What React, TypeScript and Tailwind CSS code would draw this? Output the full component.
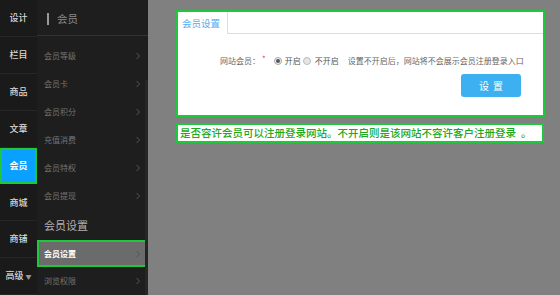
import React from "react";

const font = { fontFamily: '"Noto Sans CJK SC", "Noto Sans", sans-serif' };

function Chevron() {
  return (
    <svg width="6" height="8" viewBox="0 0 6 8" className="shrink-0">
      <path d="M1.5 1 L4.5 4 L1.5 7" fill="none" stroke="#555" strokeWidth="1" />
    </svg>
  );
}

export default function App() {
  const col1 = ["设计", "栏目", "商品", "文章", "会员", "商城", "商铺", "高级"];
  const items1 = ["会员等级", "会员卡", "会员积分", "充值消费", "会员特权", "会员提现"];
  return (
    <div className="flex w-[560px] h-[295px] overflow-hidden whitespace-nowrap" style={font}>
      <div className="w-[37px] bg-[#1a1a1a] flex flex-col shrink-0">
        {col1.map((t) =>
          t === "会员" ? (
            <div key={t} className="h-[37.5px] flex items-center justify-center bg-[#0aa0ff] border-2 border-[#1ec83a] text-[9px] text-white font-bold">
              {t}
            </div>
          ) : (
            <div key={t} className="h-[37.5px] flex items-center justify-center border-b border-[#262626] text-[9px] text-[#d8d8d8] font-medium">
              {t}
              {t === "高级" && <span className="text-[6px] ml-[2px] text-[#999]">▼</span>}
            </div>
          )
        )}
      </div>
      <div className="w-[111px] bg-[#1e1e1e] flex flex-col shrink-0 relative">
        <div className="h-[36px] border-b border-[#333] flex items-center pl-[10px] gap-[8px] pt-[3px]">
          <div className="w-[2px] h-[12px] bg-[#999]" />
          <span className="text-[10.5px] text-[#8a8a8a]">会员</span>
        </div>
        <div className="h-[6px]" />
        {items1.map((t) => (
          <div key={t} className="h-[28px] flex items-center justify-between pl-[7px] pr-[7px] text-[8px] text-[#737373]">
            <span>{t}</span>
            <Chevron />
          </div>
        ))}
        <div className="h-[30px] flex items-center pl-[7px] text-[11px] text-[#b0b0b0]">会员设置</div>
        <div className="h-[27px] flex items-center justify-between pl-[5px] pr-[5px] bg-[#6b6b6b] border-2 border-[#1ec83a] text-[8px] text-white font-bold">
          <span>会员设置</span>
          <Chevron />
        </div>
        <div className="h-[28px] flex items-center justify-between pl-[7px] pr-[7px] text-[8px] text-[#737373]">
          <span>浏览权限</span>
          <Chevron />
        </div>
        <div className="absolute right-0 top-[80px] bottom-0 w-[3px] bg-[#262626]" />
      </div>
      <div className="flex-1 bg-[#808080] pl-[28px] pt-[10px] flex flex-col">
        <div className="w-[369px] h-[107px] bg-white border-2 border-[#1ec83a] flex flex-col">
          <div className="flex h-[22px]">
            <div className="w-[50px] border-r border-[#ddd] flex items-center pl-[4px] text-[9.5px] text-[#55adf0]">会员设置</div>
            <div className="flex-1 border-b border-[#ddd]" />
          </div>
          <div className="flex items-center h-[14px] mt-[20px] pl-[42px] text-[8px] text-[#666]">
            <span>网站会员：</span>
            <span className="text-[#f33] text-[8px] ml-[2px] -mt-[4px]">*</span>
            <span className="ml-[8px] w-[8px] h-[8px] rounded-full border border-[#aaa] bg-[#eee] flex items-center justify-center">
              <span className="w-[4px] h-[4px] rounded-full bg-[#555]" />
            </span>
            <span className="ml-[3px] text-[#555]">开启</span>
            <span className="ml-[2px] w-[8px] h-[8px] rounded-full border border-[#bbb] bg-[#e6e6e6]" />
            <span className="ml-[4px] text-[#555]">不开启</span>
            <span className="ml-[9px] text-[#666]">设置不开启后，网站将不会展示会员注册登录入口</span>
          </div>
          <div className="flex justify-end pr-[22px] mt-[6px]">
            <div className="w-[60px] h-[23px] rounded-[3px] bg-[#3cb0f0] text-white text-[10px] tracking-[4px] pl-[4px] flex items-center justify-center">设置</div>
          </div>
        </div>
        <div className="w-[368px] h-[20px] mt-[6px] bg-white border-2 border-[#1ec83a] flex items-center pl-[2px] text-[10.5px] text-[#20a820] font-medium">
          是否容许会员可以注册登录网站。不开启则是该网站不容许客户注册登录<span className="ml-[5px]">。</span>
        </div>
      </div>
    </div>
  );
}
